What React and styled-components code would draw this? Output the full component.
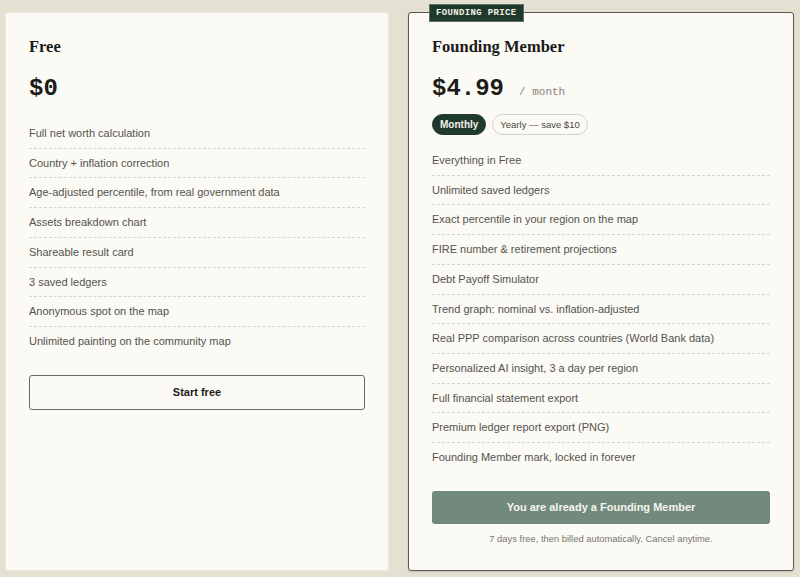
import React, { useState } from "react";
import styled, { createGlobalStyle } from "styled-components";

const GlobalStyle = createGlobalStyle`
  html, body {
    margin: 0;
    padding: 0;
    background: #e4e1d3;
  }
  body {
    font-family: "Liberation Sans", Arial, sans-serif;
  }
`;

const freeFeatures = [
  "Full net worth calculation",
  "Country + inflation correction",
  "Age-adjusted percentile, from real government data",
  "Assets breakdown chart",
  "Shareable result card",
  "3 saved ledgers",
  "Anonymous spot on the map",
  "Unlimited painting on the community map",
];

const memberFeatures = [
  "Everything in Free",
  "Unlimited saved ledgers",
  "Exact percentile in your region on the map",
  "FIRE number & retirement projections",
  "Debt Payoff Simulator",
  "Trend graph: nominal vs. inflation-adjusted",
  "Real PPP comparison across countries (World Bank data)",
  "Personalized AI insight, 3 a day per region",
  "Full financial statement export",
  "Premium ledger report export (PNG)",
  "Founding Member mark, locked in forever",
];

const App = () => {
  const [plan, setPlan] = useState("monthly");

  return (
    <>
      <GlobalStyle />
      <Page>
        <Card>
          <PlanName>Free</PlanName>
          <PriceRow>
            <Price>$0</Price>
          </PriceRow>
          <FeatureList>
            {freeFeatures.map((f) => (
              <Feature key={f}>{f}</Feature>
            ))}
          </FeatureList>
          <OutlineButton>Start free</OutlineButton>
        </Card>

        <Card featured>
          <Badge>FOUNDING PRICE</Badge>
          <PlanName>Founding Member</PlanName>
          <PriceRow>
            <Price>{plan === "monthly" ? "$4.99" : "$49.88"}</Price>
            <Period>/ {plan === "monthly" ? "month" : "year"}</Period>
          </PriceRow>
          <Toggle>
            <Pill active={plan === "monthly"} onClick={() => setPlan("monthly")}>
              Monthly
            </Pill>
            <Pill active={plan === "yearly"} onClick={() => setPlan("yearly")}>
              Yearly — save $10
            </Pill>
          </Toggle>
          <FeatureList tight>
            {memberFeatures.map((f) => (
              <Feature key={f}>{f}</Feature>
            ))}
          </FeatureList>
          <SolidButton disabled>You are already a Founding Member</SolidButton>
          <Note>7 days free, then billed automatically. Cancel anytime.</Note>
        </Card>
      </Page>
    </>
  );
};
export default App;

const Page = styled.div`
  display: grid;
  grid-template-columns: 384px 386px;
  gap: 19px;
  padding: 12px 6px 8px 5px;
  align-items: stretch;
`;

const Card = styled.div`
  position: relative;
  background: #fbfaf5;
  border: 1px solid ${(p) => (p.featured ? "#5a5a55" : "#ebe8dd")};
  border-radius: 3px;
  padding: 24px 23px 25px 23px;
  display: flex;
  flex-direction: column;
  box-shadow: ${(p) => (p.featured ? "0 1px 2px rgba(0,0,0,0.15)" : "none")};
`;

// 배지
const Badge = styled.div`
  position: absolute;
  top: -9px;
  left: 20px;
  background: #1f3a2c;
  color: #f2f0e6;
  border: 1px solid #5d6f62;
  font-family: "Liberation Mono", "DejaVu Sans Mono", monospace;
  font-size: 9px;
  font-weight: bold;
  letter-spacing: 0.35px;
  line-height: 16px;
  padding: 0 6px;
`;

const PlanName = styled.h2`
  margin: 0;
  font-family: "Liberation Serif", "DejaVu Serif", serif;
  font-weight: bold;
  font-size: 16.5px;
  line-height: 20px;
  color: #1b1b18;
`;

const PriceRow = styled.div`
  display: flex;
  align-items: baseline;
  gap: 15px;
  margin-top: 17px;
`;

const Price = styled.div`
  font-family: "Liberation Mono", "DejaVu Sans Mono", monospace;
  font-weight: bold;
  font-size: 24px;
  line-height: 30px;
  color: #1b1b18;
`;

const Period = styled.span`
  font-family: "Liberation Mono", "DejaVu Sans Mono", monospace;
  font-size: 11px;
  color: #86847c;
`;

const Toggle = styled.div`
  display: flex;
  gap: 6px;
  margin-top: 10px;
`;

const Pill = styled.button`
  font-family: "Liberation Sans", Arial, sans-serif;
  font-size: ${(p) => (p.active ? "10px" : "9.5px")};
  font-weight: ${(p) => (p.active ? "bold" : "normal")};
  height: 21px;
  padding: 0 ${(p) => (p.active ? "7px" : "7px")};
  border-radius: 11px;
  border: 1px solid ${(p) => (p.active ? "#1f3a2c" : "#d3d0c5")};
  background: ${(p) => (p.active ? "#1f3a2c" : "transparent")};
  color: ${(p) => (p.active ? "#f4f2ea" : "#4a4944")};
  cursor: pointer;
`;

const FeatureList = styled.ul`
  list-style: none;
  margin: ${(p) => (p.tight ? "11px" : "15px")} 0 0;
  padding: 0;
`;

const Feature = styled.li`
  font-size: 11px;
  line-height: 14.7px;
  padding: 7px 0;
  color: #54534d;
  border-bottom: 1px dashed #d8d5cb;

  &:last-child {
    border-bottom: none;
  }
`;

const OutlineButton = styled.button`
  margin-top: 19px;
  height: 35px;
  width: 100%;
  background: transparent;
  border: 1px solid #6a6963;
  border-radius: 3px;
  font-family: "Liberation Sans", Arial, sans-serif;
  font-size: 11px;
  font-weight: bold;
  color: #1b1b18;
  cursor: pointer;
`;

const SolidButton = styled.button`
  margin-top: 19px;
  height: 33px;
  width: 100%;
  background: #728a7c;
  border: none;
  border-radius: 3px;
  font-family: "Liberation Sans", Arial, sans-serif;
  font-size: 11px;
  font-weight: bold;
  color: #f6f5ef;
`;

const Note = styled.p`
  margin: 9px 0 0;
  text-align: center;
  font-size: 9.4px;
  line-height: 12px;
  color: #78766e;
`;
